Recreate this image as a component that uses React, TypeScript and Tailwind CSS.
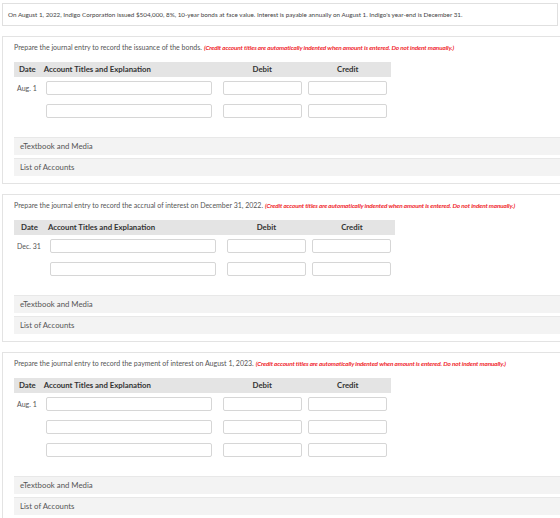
import React from 'react';

type Section = {
  prompt: string;
  date: string;
  rows: number;
};

const sections: Section[] = [
  { prompt: 'Prepare the journal entry to record the issuance of the bonds.', date: 'Aug. 1', rows: 2 },
  { prompt: 'Prepare the journal entry to record the accrual of interest on December 31, 2022.', date: 'Dec. 31', rows: 2 },
  { prompt: 'Prepare the journal entry to record the payment of interest on August 1, 2023.', date: 'Aug. 1', rows: 3 },
];

const Box = () => (
  <input type="text" className="block h-[14px] w-full rounded-[2px] border border-[#d6d6d6] bg-white outline-none" />
);

const JournalSection: React.FC<{ section: Section }> = ({ section }) => {
  const rows = Array.from({ length: section.rows }, (_, i) => i);

  return (
    <div className="mt-[10px] w-[600px] border border-[#e3e3e3] bg-white pt-[6px] pb-[7px] pl-[11px]">
      <div className="flex h-[8px] items-baseline gap-[2px] whitespace-nowrap text-[#555]">
        <span className="text-[7px] leading-[8px]">{section.prompt}</span>
        <span className="text-[6.4px] leading-[8px] tracking-[-0.15px] font-bold italic text-[#f0262c]">
          (Credit account titles are automatically indented when amount is entered. Do not indent manually.)
        </span>
      </div>

      <div className="mt-[11px] grid w-fit grid-cols-[auto_auto_auto_auto]">
        <div className="flex h-[15px] items-center justify-center bg-[#e4e4e4] px-[3px] text-[7.8px] font-bold text-[#333]">Date</div>
        <div className="flex h-[15px] items-center bg-[#e4e4e4] pl-[3px] text-[7.8px] font-bold text-[#333]">Account Titles and Explanation</div>
        <div className="flex h-[15px] items-center justify-center bg-[#e4e4e4] text-[7.8px] font-bold text-[#333]">Debit</div>
        <div className="flex h-[15px] items-center justify-center bg-[#e4e4e4] text-[7.8px] font-bold text-[#333]">Credit</div>

        {rows.map((i) => (
          <React.Fragment key={i}>
            <div className="flex h-[23px] items-center whitespace-nowrap pt-[4px] pb-[5px] pl-[3px] pr-[4px] text-[7px] text-[#555]">
              {i === 0 ? section.date : ''}
            </div>
            <div className="pt-[4px] pb-[5px] pl-[5px] pr-[8px]">
              <div className="w-[166px]"><Box /></div>
            </div>
            <div className="pt-[4px] pb-[5px] px-[3px]">
              <div className="w-[79px]"><Box /></div>
            </div>
            <div className="pt-[4px] pb-[5px] pl-[3px] pr-[4px]">
              <div className="w-[79px]"><Box /></div>
            </div>
          </React.Fragment>
        ))}
      </div>

      <div className="mt-[14px] flex flex-col gap-[3px] text-[7.8px]">
        <div className="flex h-[18px] items-center border-t border-[#e8e8e8] bg-[#f3f3f3] pl-[6px] text-[#555]">eTextbook and Media</div>
        <div className="flex h-[18px] items-center border-t border-[#e8e8e8] bg-[#f3f3f3] pl-[6px] text-[#555]">List of Accounts</div>
      </div>
    </div>
  );
};

export default function App() {
  return (
    <div className="h-[518px] w-[560px] overflow-hidden bg-white px-[2px] pt-[3px] font-['Lato',sans-serif]">
      <div className="flex h-[23px] w-[556px] items-center border border-[#e0e0e0] pl-[5px] text-[6.3px] text-[#444]">
        On August 1, 2022, Indigo Corporation issued $504,000, 8%, 10-year bonds at face value. Interest is payable annually on August 1. Indigo's year-end is December 31.
      </div>
      {sections.map((s, i) => (
        <JournalSection key={i} section={s} />
      ))}
    </div>
  );
}
